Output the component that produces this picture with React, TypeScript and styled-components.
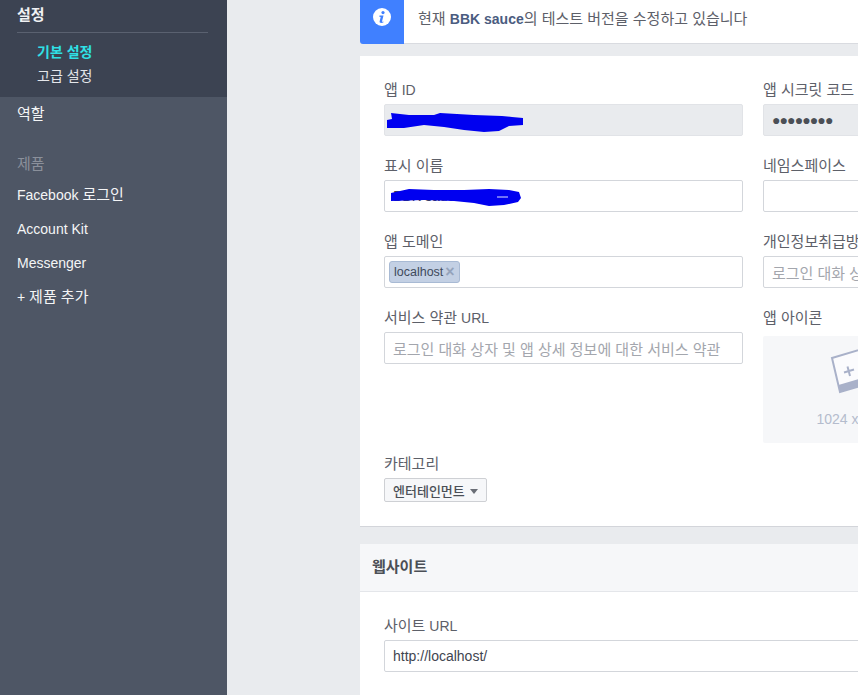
import React from "react";
import styled, { createGlobalStyle } from "styled-components";

const Global = createGlobalStyle`
  html, body { margin: 0; padding: 0; height: 100%; overflow: hidden; background: #e9ebee; }
  * { box-sizing: border-box; }
  body { font-family: "Liberation Sans", "Noto Sans CJK KR", sans-serif; }
`;

const Page = styled.div`
  display: flex;
  width: 858px;
  height: 695px;
  overflow: hidden;
  background: #e9ebee;
`;

const Ko = styled.span`
  font-size: 15px;
`;

const Sidebar = styled.nav`
  flex: 0 0 227px;
  background: #4e5665;
  color: #fff;
  font-size: 14px;
`;

const ActiveGroup = styled.div`
  height: 97px;
  background: #3c4352;
  padding: 6px 19px 0 17px;
`;

const GroupTitle = styled.div`
  font-weight: 700;
  font-size: 15px;
  line-height: 18px;
  padding-bottom: 8px;
  border-bottom: 1px solid #5a6170;
  color: #f0f1f3;
`;

const SubList = styled.div`
  padding: 7px 0 0 20px;
`;

const SubItem = styled.div<{ $active?: boolean }>`
  font-size: 14px;
  line-height: 24px;
  font-weight: ${(p) => (p.$active ? 700 : 400)};
  color: ${(p) => (p.$active ? "#2fe0e6" : "#e4e6ea")};
`;

const NavList = styled.div`
  padding: 7px 0 0 17px;
`;

const NavItem = styled.div`
  height: 34px;
  line-height: 20px;
  color: #f4f5f6;
`;

const NavHeading = styled.div`
  font-size: 15px;
  line-height: 20px;
  color: #8b909b;
  margin-top: 16px;
  margin-bottom: 11px;
`;

const Main = styled.main`
  flex: 0 0 787px;
  padding-left: 133px;
`;

const Banner = styled.div`
  display: flex;
  align-items: center;
  height: 44px;
  background: #fff;
  border-bottom: 1px solid #d9dbe0;
  border-radius: 0 0 3px 3px;
  margin-bottom: 12px;
`;

const BannerIcon = styled.div`
  flex: 0 0 44px;
  align-self: stretch;
  display: flex;
  align-items: center;
  justify-content: center;
  padding-bottom: 11px;
  background: #4080ff;
  border-radius: 0 0 0 3px;
  margin-bottom: -1px;
`;

const BannerText = styled.div`
  padding: 0 0 6px 14px;
  font-size: 15px;
  line-height: 18px;
  color: #5d6069;
  strong { color: #4b5c80; font-weight: 700; font-size: 14px; }
`;

const Card = styled.section`
  background: #fff;
  border-bottom: 1px solid #d3d5da;
  margin-bottom: 17px;
`;

const CardBody = styled.div`
  padding: 24px;
`;

const Grid = styled.div`
  display: grid;
  grid-template-columns: 359px 359px;
  column-gap: 20px;
`;

const Field = styled.div<{ $tall?: boolean }>`
  height: ${(p) => (p.$tall ? "146px" : "76px")};
  min-width: 0;
`;

const Label = styled.div`
  font-size: 14px;
  line-height: 20px;
  height: 18px;
  margin-bottom: 6px;
  color: #5d6069;
  white-space: nowrap;
`;

const InputBox = styled.div<{ $disabled?: boolean; $placeholder?: boolean }>`
  position: relative;
  display: flex;
  align-items: center;
  height: 32px;
  padding: 0 8px;
  background: ${(p) => (p.$disabled ? "#e9ebee" : "#fff")};
  border: 1px solid ${(p) => (p.$disabled ? "#e1e3e7" : "#d3d6db")};
  border-radius: 2px;
  font-size: ${(p) => (p.$placeholder ? "15px" : "14px")};
  color: ${(p) => (p.$placeholder ? "#a3a6ad" : "#3f4550")};
  white-space: nowrap;
  overflow: hidden;
`;

const Scribble = styled.svg`
  position: absolute;
  left: -1px;
  top: -1px;
  pointer-events: none;
`;

const Token = styled.span`
  display: inline-flex;
  align-items: center;
  height: 22px;
  margin-left: -4px;
  padding: 0 4px;
  background: #c3d0e4;
  border: 1px solid #a8bad4;
  border-radius: 3px;
  font-size: 12.5px;
  color: #3f4a5c;
`;

const TokenX = styled.span`
  margin-left: 2px;
  font-size: 16px;
  line-height: 16px;
  font-weight: 700;
  color: #94a3bb;
`;

const Dots = styled.span`
  font-size: 14px;
  letter-spacing: -0.9px;
  color: #4b4f56;
`;

const IconDrop = styled.div`
  width: 184px;
  height: 107px;
  margin-top: 10px;
  background: #f6f7f9;
  display: flex;
  flex-direction: column;
  align-items: center;
  padding-top: 6px;
  border-radius: 2px;
`;

const DropSize = styled.div`
  margin-top: 9px;
  font-size: 14px;
  line-height: 16px;
  white-space: nowrap;
  color: #b4bccd;
`;

const SelectBtn = styled.div`
  display: inline-flex;
  align-items: center;
  height: 24px;
  padding: 0 8px;
  background: #f6f7f9;
  border: 1px solid #ced0d4;
  border-radius: 2px;
  font-size: 13px;
  font-weight: 500;
  color: #4b4f56;
  &::after {
    content: "";
    margin-left: 5px;
    margin-top: 2px;
    border-left: 4.5px solid transparent;
    border-right: 4.5px solid transparent;
    border-top: 5px solid #6a6e76;
  }
`;

const CardHead = styled.div`
  height: 48px;
  display: flex;
  align-items: center;
  padding: 0 0 4px 12px;
  background: #f6f7f9;
  border-bottom: 1px solid #e4e6ea;
  font-size: 15px;
  font-weight: 700;
  color: #4b4f56;
`;

const info = (
  <svg width="24" height="24" viewBox="0 0 24 24">
    <circle cx="12" cy="12" r="9" fill="#fff" />
    <circle cx="13" cy="7.6" r="1.6" fill="#4080ff" />
    <path d="M9.6 10.4h3.9l-1.5 6c-.1.5.3.6 1.5.2l-.2.9c-1.5.7-4 .8-3.7-.9l1.1-4.7-1.6-.4z" fill="#4080ff" />
  </svg>
);

const monitor = (
  <svg width="72" height="60" viewBox="0 0 72 60">
    <path d="M40 46L55 41L62 49L42 55Z" fill="#c4cadb" />
    <path d="M13 16L63 1L71 35L21 50Z" fill="#fbfbfd" stroke="#a9b1c9" strokeWidth="2" />
    <path d="M21 50L71 35L69.5 28L19.5 43Z" fill="#a9b1c9" />
    <path d="M28.5 24.5L31 34M25 30.5L35 27.5" stroke="#a9b1c9" strokeWidth="2" fill="none" />
  </svg>
);

export default function App() {
  return (
    <Page>
      <Global />
      <Sidebar>
        <ActiveGroup>
          <GroupTitle>설정</GroupTitle>
          <SubList>
            <SubItem $active>기본 설정</SubItem>
            <SubItem>고급 설정</SubItem>
          </SubList>
        </ActiveGroup>
        <NavList>
          <NavItem><Ko>역할</Ko></NavItem>
          <NavHeading>제품</NavHeading>
          <NavItem>Facebook <Ko>로그인</Ko></NavItem>
          <NavItem>Account Kit</NavItem>
          <NavItem>Messenger</NavItem>
          <NavItem>+ <Ko>제품 추가</Ko></NavItem>
        </NavList>
      </Sidebar>
      <Main>
        <Banner>
          <BannerIcon>{info}</BannerIcon>
          <BannerText>
            현재 <strong>BBK sauce</strong>의 테스트 버전을 수정하고 있습니다
          </BannerText>
        </Banner>
        <Card>
          <CardBody>
            <Grid>
              <Field>
                <Label><Ko>앱</Ko> ID</Label>
                <InputBox $disabled>
                  <Scribble width="359" height="32" viewBox="0 0 359 32">
                    <path d="M7 9L25 11L50 11L56 9L90 11L118 12L128 13L139 14L139 21L125 22L115 27L100 28L80 26L60 23L40 21L20 24L3 24L3 16L8 15Z" fill="#0000f0" />
                  </Scribble>
                </InputBox>
              </Field>
              <Field>
                <Label><Ko>앱 시크릿 코드</Ko></Label>
                <InputBox $disabled>
                  <Dots>●●●●●●●●</Dots>
                </InputBox>
              </Field>
              <Field>
                <Label><Ko>표시 이름</Ko></Label>
                <InputBox>
                  BBK sauce
                  <Scribble width="359" height="32" viewBox="0 0 359 32">
                    <path d="M7 13L25 9L50 10L80 10L105 9L125 10L135 12L137 18L134 22L120 25L105 26L90 23L70 21L40 20L7 21Z" fill="#0000f0" />
                    <path d="M113 17L124 17" stroke="#dfe3ff" strokeWidth="1" />
                  </Scribble>
                </InputBox>
              </Field>
              <Field>
                <Label><Ko>네임스페이스</Ko></Label>
                <InputBox />
              </Field>
              <Field>
                <Label><Ko>앱 도메인</Ko></Label>
                <InputBox>
                  <Token>
                    localhost<TokenX>×</TokenX>
                  </Token>
                </InputBox>
              </Field>
              <Field>
                <Label><Ko>개인정보취급방침</Ko> URL</Label>
                <InputBox $placeholder>로그인 대화 상자 및 앱 상세 정보에 대한 개인정보취급방침</InputBox>
              </Field>
              <Field $tall>
                <Label><Ko>서비스 약관</Ko> URL</Label>
                <InputBox $placeholder>로그인 대화 상자 및 앱 상세 정보에 대한 서비스 약관</InputBox>
              </Field>
              <Field $tall>
                <Label><Ko>앱 아이콘</Ko></Label>
                <IconDrop>
                  {monitor}
                  <DropSize>1024 x 1024</DropSize>
                </IconDrop>
              </Field>
            </Grid>
            <div>
              <Label><Ko>카테고리</Ko></Label>
              <SelectBtn>엔터테인먼트</SelectBtn>
            </div>
          </CardBody>
        </Card>
        <Card>
          <CardHead>웹사이트</CardHead>
          <CardBody>
            <Field>
              <Label><Ko>사이트</Ko> URL</Label>
              <InputBox>http://localhost/</InputBox>
            </Field>
          </CardBody>
        </Card>
      </Main>
    </Page>
  );
}
